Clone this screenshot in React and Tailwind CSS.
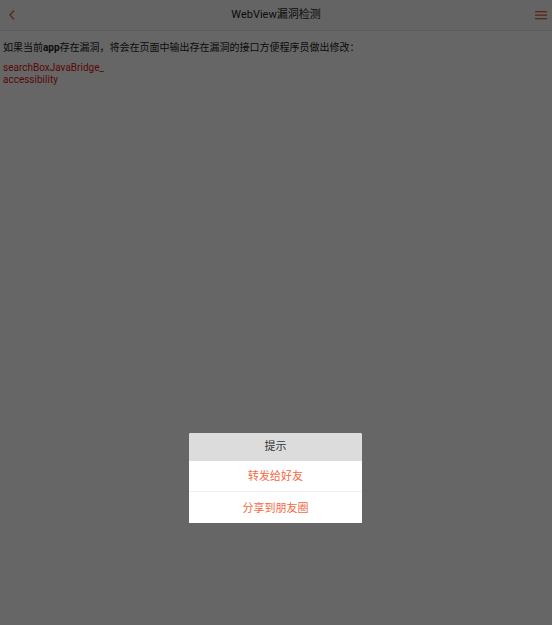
import React from 'react';

const font = { fontFamily: 'Roboto, "Noto Sans CJK SC", sans-serif' };

export default function App() {
  return (
    <div className="relative w-[552px] h-[625px] bg-white overflow-hidden" style={font}>
      {/* Header */}
      <div className="h-[31px] flex items-center justify-between px-[6px] border-b border-[#e6e6e6] bg-[#fafafa]">
        <svg width="10" height="12" viewBox="0 0 10 12" className="ml-[1px]">
          <path d="M7 1.5 L3 6 L7 10.5" fill="none" stroke="#e0603c" strokeWidth="1.3" />
        </svg>
        <span className="text-[11px] text-[#222] pt-[1px]">WebView漏洞检测</span>
        <svg width="12" height="10" viewBox="0 0 12 10" className="mr-[-1px]">
          <rect x="0" y="1" width="12" height="1.3" fill="#e0603c" />
          <rect x="0" y="4.5" width="12" height="1.3" fill="#e0603c" />
          <rect x="0" y="8" width="12" height="1.3" fill="#e0603c" />
        </svg>
      </div>

      {/* Content */}
      <div className="px-[3px] pt-[10px]">
        <p className="text-[10px] leading-[14px] text-[#222]">
          如果当前<b>app</b>存在漏洞，将会在页面中输出存在漏洞的接口方便程序员做出修改：
        </p>
        <div className="mt-[7px] text-[10px] leading-[12px] text-[#e01414]">
          <div>searchBoxJavaBridge_</div>
          <div>accessibility</div>
        </div>
      </div>

      {/* Dim overlay */}
      <div className="absolute inset-0 bg-black/60" />

      {/* Dialog */}
      <div className="absolute left-[189px] top-[433px] w-[173px] bg-white rounded-t-[2px] overflow-hidden">
        <div className="h-[28px] bg-[#dcdcdc] flex items-center justify-center text-[11px] text-[#333]">提示</div>
        <div className="h-[31px] pt-[3px] flex items-center justify-center text-[11px] text-[#f26a44] border-b border-[#f0f0f0]">转发给好友</div>
        <div className="h-[31px] pt-[3px] flex items-center justify-center text-[11px] text-[#f26a44]">分享到朋友圈</div>
      </div>
    </div>
  );
}
